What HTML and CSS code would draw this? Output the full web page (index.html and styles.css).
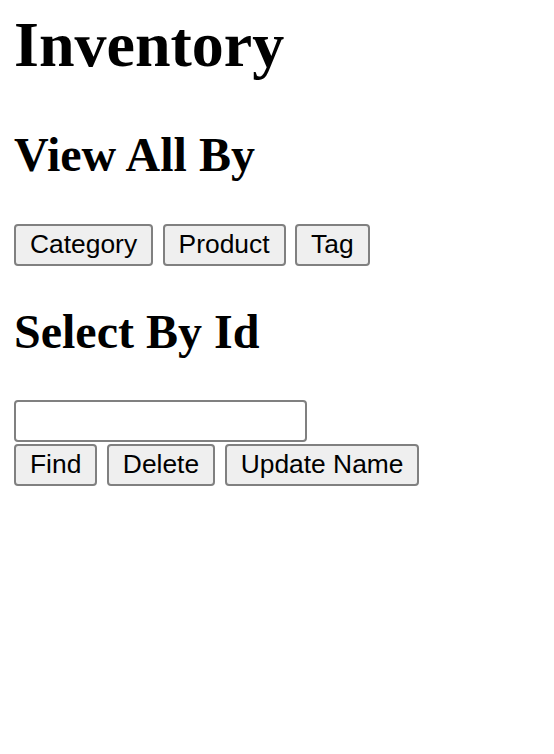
FILE: index.html
```html
<!DOCTYPE html>
<html lang="en">
<head>
<meta charset="utf-8">
<title>Inventory</title>
<link rel="stylesheet" href="styles.css">
</head>
<body>
<main class="page">
  <h1 class="title">Inventory</h1>
  <h2 class="section section-view">View All By</h2>
  <div class="btn-row">
    <button class="btn" type="button">Category</button>
    <button class="btn" type="button">Product</button>
    <button class="btn" type="button">Tag</button>
  </div>
  <h2 class="section section-select">Select By Id</h2>
  <input class="id-input" type="text">
  <div class="btn-row btn-row-actions">
    <button class="btn" type="button">Find</button>
    <button class="btn" type="button">Delete</button>
    <button class="btn" type="button">Update Name</button>
  </div>
</main>
</body>
</html>
```
FILE: styles.css
```css
html, body {
  margin: 0;
  padding: 0;
  background: #ffffff;
}

.page {
  padding: 8px 14px 0;
  font-family: "Liberation Serif", "Times New Roman", serif;
  color: #000000;
}

.title {
  margin: 0;
  font-size: 64px;
  line-height: 74px;
  font-weight: bold;
}

.section {
  font-size: 48px;
  line-height: 56px;
  font-weight: bold;
}

.section-view {
  margin: 45px 0 40.5px;
}

.section-select {
  margin: 38.5px 0 40px;
}

.btn-row {
  display: flex;
  gap: 9.5px;
}

.btn-row-actions {
  margin-top: 1.5px;
}

.btn {
  box-sizing: border-box;
  height: 42px;
  margin: 0;
  padding: 0 14px;
  border: 2px solid #808080;
  border-radius: 4px;
  background: #efefef;
  color: #000000;
  font-family: "Liberation Sans", Arial, sans-serif;
  font-size: 26.4px;
  line-height: 1;
}

.id-input {
  display: block;
  box-sizing: border-box;
  width: 293px;
  height: 42px;
  margin: 0;
  padding: 2px 4px;
  border: 2px solid #808080;
  border-radius: 4px;
  background: #ffffff;
  font-family: "Liberation Sans", Arial, sans-serif;
  font-size: 26px;
}
```
